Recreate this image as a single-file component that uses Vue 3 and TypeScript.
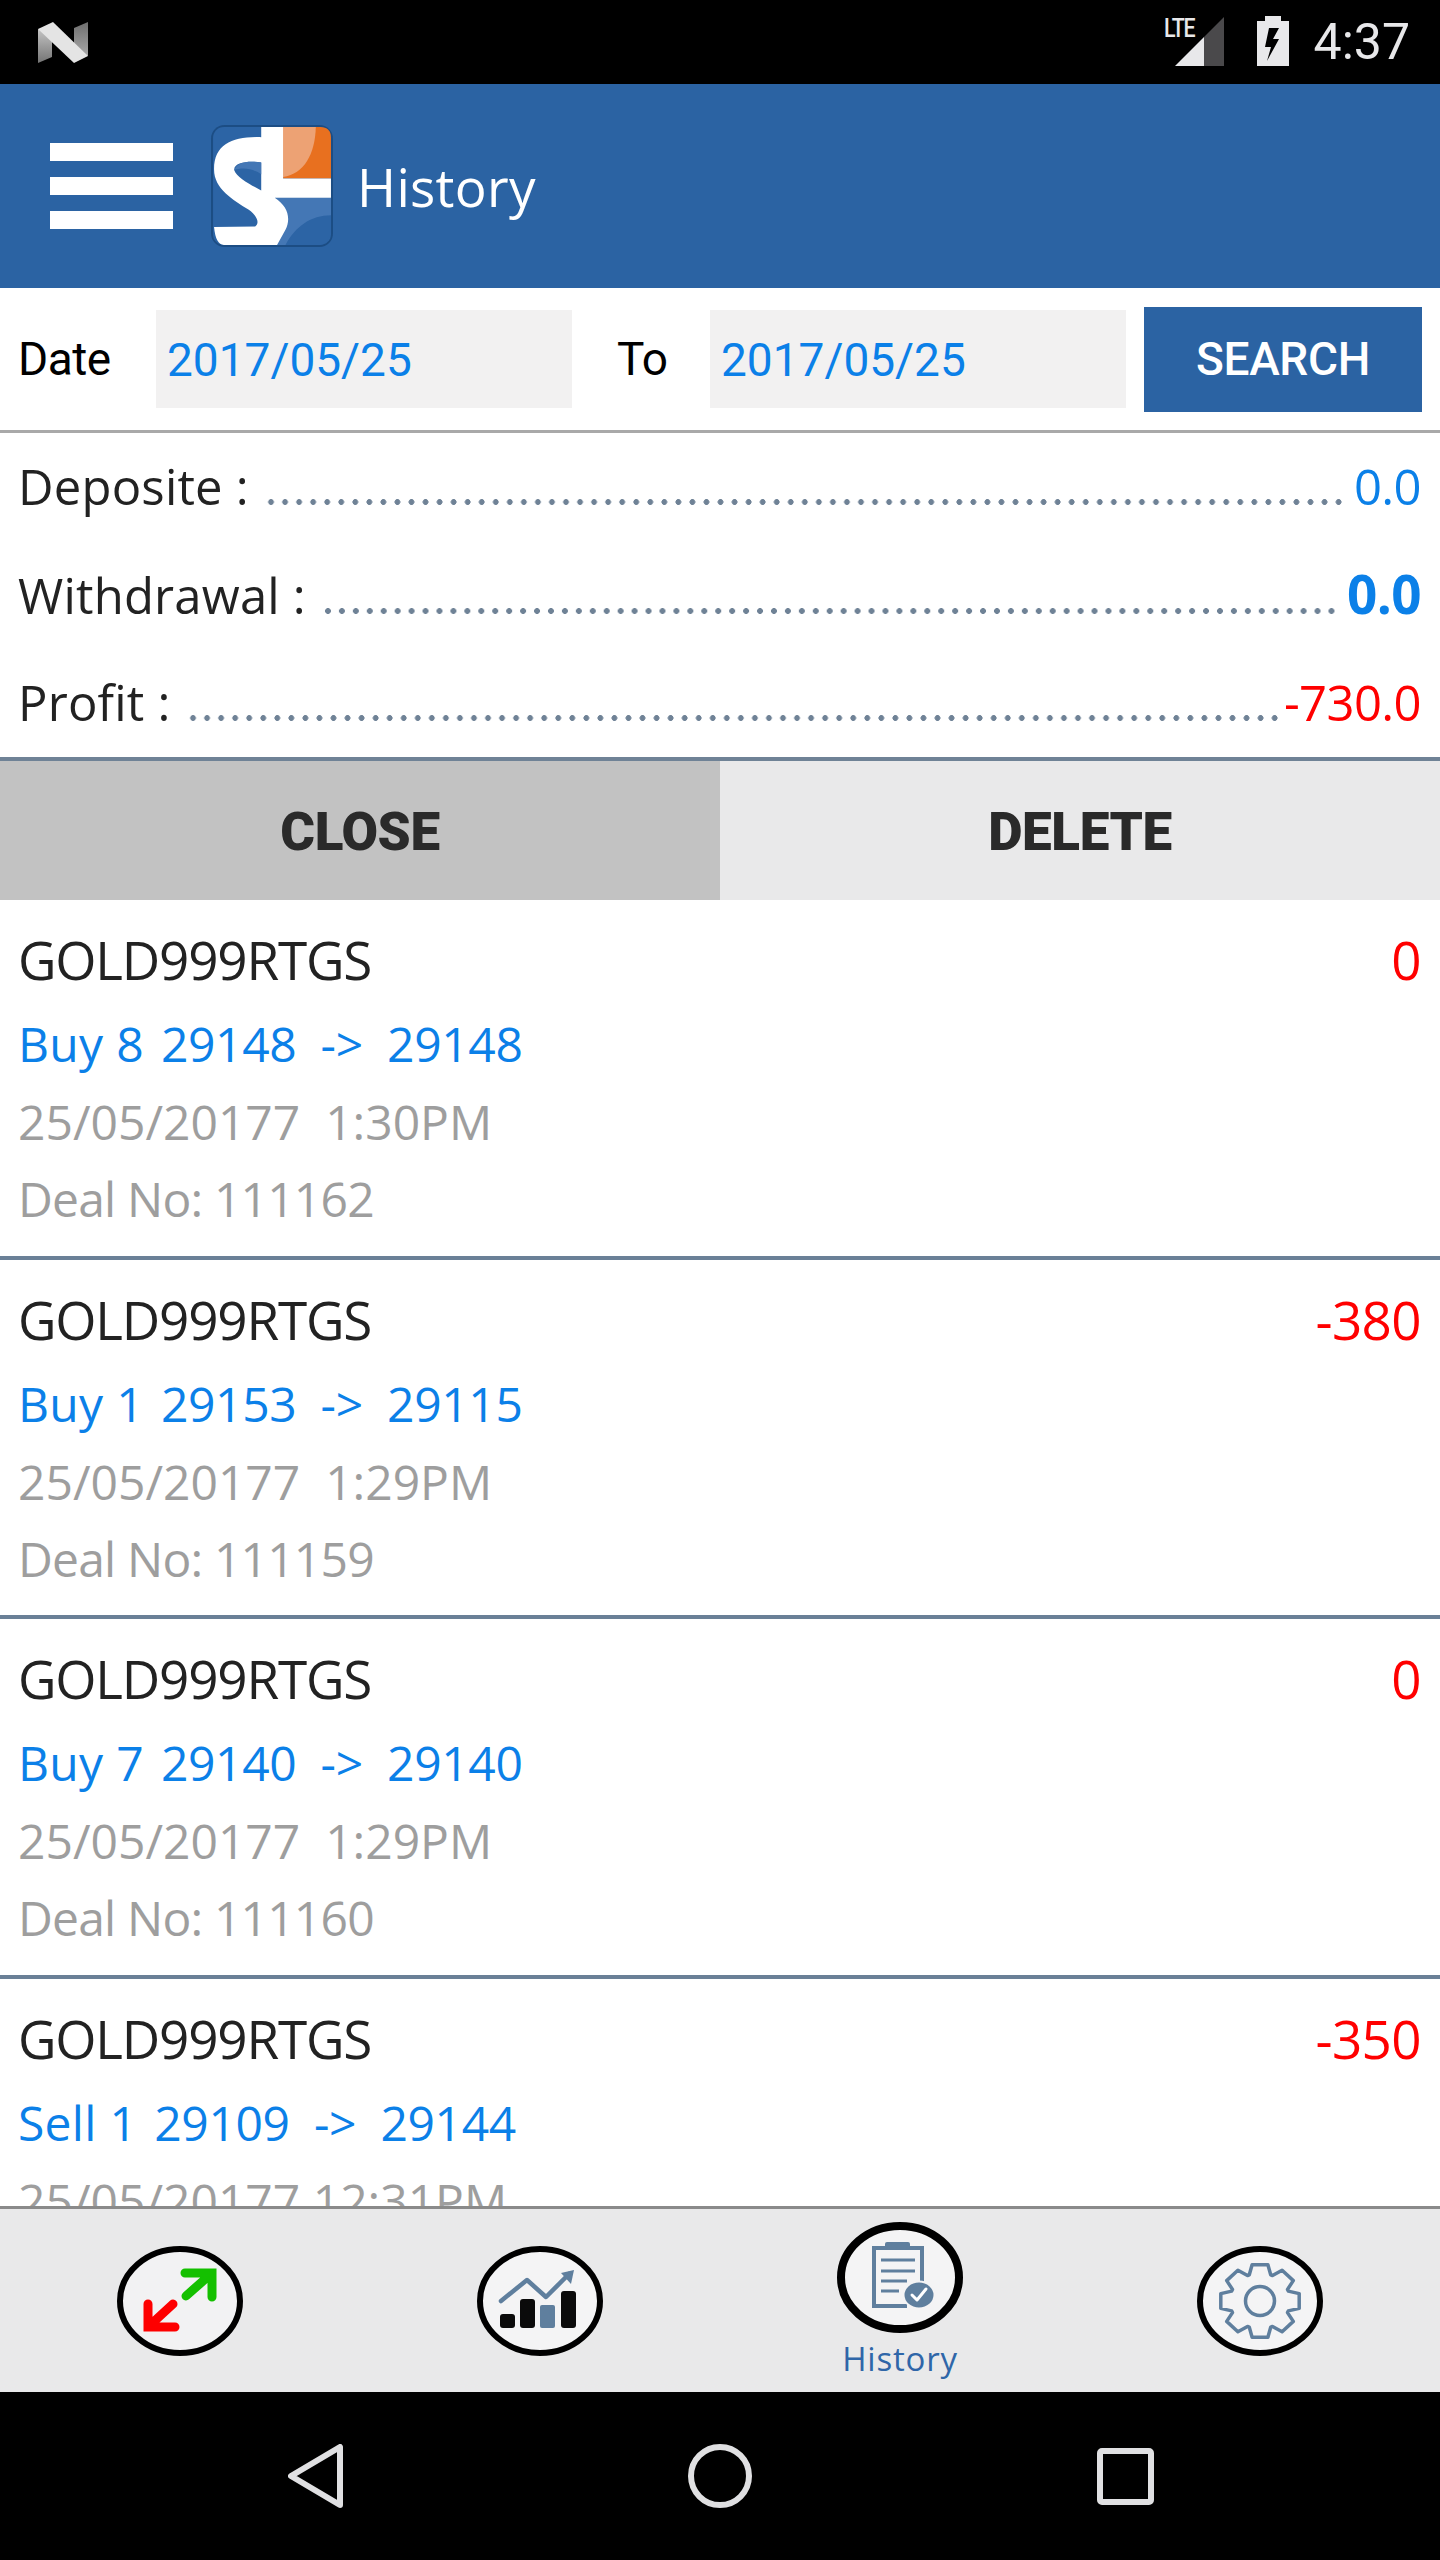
<script setup lang="ts">
import { computed } from "vue";

interface Deal {
  symbol: string;
  amount: string;
  side: string;
  prices: string;
  time: string;
  dealNo?: string;
}

interface SummaryLine {
  label: string;
  value: string;
  tone: string;
}

const summary: SummaryLine[] = [
  { label: "Deposite :", value: "0.0", tone: "blue" },
  { label: "Withdrawal :", value: "0.0", tone: "blue-bold" },
  { label: "Profit :", value: "-730.0", tone: "red" }
];

const deals: Deal[] = [
  { symbol: "GOLD999RTGS", amount: "0", side: "Buy 8", prices: "29148  ->  29148", time: "25/05/20177  1:30PM", dealNo: "Deal No: 111162" },
  { symbol: "GOLD999RTGS", amount: "-380", side: "Buy 1", prices: "29153  ->  29115", time: "25/05/20177  1:29PM", dealNo: "Deal No: 111159" },
  { symbol: "GOLD999RTGS", amount: "0", side: "Buy 7", prices: "29140  ->  29140", time: "25/05/20177  1:29PM", dealNo: "Deal No: 111160" },
  { symbol: "GOLD999RTGS", amount: "-350", side: "Sell 1", prices: "29109  ->  29144", time: "25/05/20177 12:31PM" }
];

// 8 tooth gear outline, centred on the 126x110 icon box
const gearPoints = computed(() => {
  const pts: string[] = [];
  const outer = 37;
  const root = 28;
  for (let i = 0; i < 8; i++) {
    const a = (i * Math.PI) / 4 - Math.PI / 2;
    const steps: [number, number][] = [
      [root, a - 0.36],
      [outer, a - 0.2],
      [outer, a + 0.2],
      [root, a + 0.36]
    ];
    for (const [r, t] of steps) {
      pts.push(`${(63 + r * Math.cos(t) * 1.08).toFixed(1)},${(55 + r * Math.sin(t)).toFixed(1)}`);
    }
  }
  return pts.join(" ");
});
</script>

<template>
  <div class="phone">
    <div class="status-bar">
      <svg class="n-logo" width="50" height="41" viewBox="0 0 50 41">
        <defs>
          <linearGradient id="n-left" x1="0" y1="0" x2="0" y2="1">
            <stop offset="0" stop-color="#c4c4c4" />
            <stop offset="1" stop-color="#747474" />
          </linearGradient>
          <linearGradient id="n-right" x1="0" y1="0" x2="0" y2="1">
            <stop offset="0" stop-color="#6e6e6e" />
            <stop offset="1" stop-color="#a8a8a8" />
          </linearGradient>
        </defs>
        <polygon points="0,7 14,12 14,35 0,41" fill="url(#n-left)" />
        <polygon points="36,6 50,0 50,34 36,28" fill="url(#n-right)" />
        <polygon points="0,7 15,0 50,34 36,41" fill="#e4e4e4" />
      </svg>
      <div class="status-right">
        <span class="lte">LTE</span>
        <svg class="signal" width="49" height="49" viewBox="0 0 49 49">
          <polygon points="49,0 49,49 29,49 29,20" fill="#4a494b" />
          <polygon points="29,20 29,49 0,49" fill="#e8e8ea" />
        </svg>
        <svg class="battery" width="32" height="50" viewBox="0 0 32 50">
          <path d="M8 0H24V5H32V50H0V5H8Z" fill="#e8e8ea" />
          <polygon points="22,12 12,12 8,31 14,31 10,45 22,23 16,23" fill="#000" />
        </svg>
        <span class="clock">4:37</span>
      </div>
    </div>

    <header class="app-bar">
      <div class="burger">
        <span></span>
        <span></span>
        <span></span>
      </div>
      <svg class="logo" width="124" height="124" viewBox="-9 -9 368 368">
        <rect x="-6" y="-6" width="362" height="362" rx="40" fill="#1c4d84" />
        <rect width="350" height="350" rx="32" fill="#2c64a5" />
        <path d="M183 210H350V262C290 262 245 295 215 350H170Z" fill="#4477b5" />
        <path d="M208 0H318Q350 0 350 32V153H208Z" fill="#e8701f" />
        <path d="M208 0H305C303 80 270 140 208 148Z" fill="#eda274" />
        <path d="M143 0H208V153H350V210H183C222 235 232 270 215 305L190 350H32Q8 350 3 297L125 295C140 285 130 262 105 245C60 215 3 185 3 125C3 50 60 28 143 30Z" fill="#fff" />
        <path d="M143 105C105 100 60 105 63 128C70 150 110 170 143 188Z" fill="#2c64a5" />
        <path d="M143 105C105 100 72 102 63 128C90 118 120 125 143 140Z" fill="#4477b5" />
      </svg>
      <h1 class="title">History</h1>
    </header>

    <section class="filter">
      <span class="filter-label">Date</span>
      <div class="date-field">2017/05/25</div>
      <span class="filter-label to">To</span>
      <div class="date-field">2017/05/25</div>
      <button class="search">SEARCH</button>
    </section>

    <section class="summary">
      <div v-for="line in summary" :key="line.label" class="summary-row">
        <span class="summary-label">{{ line.label }}</span>
        <span class="dots"></span>
        <span class="summary-value" :class="line.tone">{{ line.value }}</span>
      </div>
    </section>

    <div class="tabs">
      <div class="tab active">CLOSE</div>
      <div class="tab">DELETE</div>
    </div>

    <div class="deal-list">
      <article v-for="(deal, i) in deals" :key="i" class="deal">
        <div class="deal-top">
          <span class="deal-symbol">{{ deal.symbol }}</span>
          <span class="deal-amount">{{ deal.amount }}</span>
        </div>
        <div class="deal-trade">
          <span class="deal-side">{{ deal.side }}</span>
          <span class="deal-prices">{{ deal.prices }}</span>
        </div>
        <div class="deal-time">{{ deal.time }}</div>
        <div v-if="deal.dealNo" class="deal-no">{{ deal.dealNo }}</div>
      </article>
    </div>

    <nav class="bottom-tabs">
      <div class="bottom-tab">
        <svg width="126" height="110" viewBox="0 0 126 110">
          <ellipse cx="63" cy="55" rx="60" ry="52" fill="#f2f2f3" stroke="#000" stroke-width="6" />
          <path d="M68 27H95V51M95 27L69 50" fill="none" stroke="#14c000" stroke-width="9" stroke-linecap="round" />
          <path d="M31 58V81H58M31 81L56 58" fill="none" stroke="#fe0000" stroke-width="9" stroke-linecap="round" />
        </svg>
      </div>
      <div class="bottom-tab">
        <svg width="126" height="110" viewBox="0 0 126 110">
          <ellipse cx="63" cy="55" rx="60" ry="52" fill="#f4f4f5" stroke="#000" stroke-width="6" />
          <rect x="23" y="68" width="15" height="14" rx="3" fill="#0b0b0b" />
          <rect x="43" y="53" width="15" height="29" rx="3" fill="#0b0b0b" />
          <rect x="63" y="59" width="15" height="23" rx="2" fill="#5f7f9e" />
          <rect x="84" y="45" width="15" height="37" rx="3" fill="#0b0b0b" />
          <path d="M24 55L50 34L69 51L92 28" fill="none" stroke="#5f7f9e" stroke-width="4.5" stroke-linecap="round" stroke-linejoin="round" />
          <polygon points="97,24 94,38 84,27" fill="#5f7f9e" />
        </svg>
      </div>
      <div class="bottom-tab current">
        <svg width="126" height="111" viewBox="0 0 126 111">
          <ellipse cx="63" cy="55.5" rx="59" ry="51.5" fill="#f4f4f5" stroke="#000" stroke-width="8" />
          <path d="M70 84H37V26H85V60" fill="none" stroke="#5f7f9e" stroke-width="4" />
          <rect x="48" y="20" width="25" height="7" rx="2" fill="#5f7f9e" />
          <path d="M44 38H78M44 49H78M44 59H70M44 69H62" fill="none" stroke="#5f7f9e" stroke-width="3" />
          <ellipse cx="82" cy="73" rx="15.5" ry="13.5" fill="#5f7f9e" stroke="#f4f4f5" stroke-width="2" />
          <path d="M75 73L80 78L89 67" fill="none" stroke="#fff" stroke-width="3" stroke-linecap="round" stroke-linejoin="round" />
        </svg>
        <span class="bottom-label">History</span>
      </div>
      <div class="bottom-tab">
        <svg width="126" height="110" viewBox="0 0 126 110">
          <ellipse cx="63" cy="55" rx="60" ry="52" fill="#f4f4f5" stroke="#000" stroke-width="6" />
          <polygon :points="gearPoints" fill="none" stroke="#5f7f9e" stroke-width="3.5" stroke-linejoin="round" />
          <ellipse cx="63" cy="55" rx="14.5" ry="14.5" fill="none" stroke="#5f7f9e" stroke-width="3.5" />
        </svg>
      </div>
    </nav>

    <div class="nav-bar">
      <svg width="55" height="64" viewBox="0 0 55 64">
        <path d="M52 3V61L3 32Z" fill="none" stroke="#e0e0e2" stroke-width="6" stroke-linejoin="round" />
      </svg>
      <svg width="64" height="64" viewBox="0 0 64 64">
        <circle cx="32" cy="32" r="29" fill="none" stroke="#e0e0e2" stroke-width="6" />
      </svg>
      <svg width="57" height="57" viewBox="0 0 57 57">
        <rect x="3" y="3" width="51" height="51" rx="2" fill="none" stroke="#e0e0e2" stroke-width="6" />
      </svg>
    </div>
  </div>
</template>

<style scoped>
.phone {
  width: 1440px;
  height: 2560px;
  display: flex;
  flex-direction: column;
  overflow: hidden;
  background: #fff;
  font-family: "Open Sans", "Noto Sans", sans-serif;
}

.status-bar {
  height: 84px;
  flex: none;
  background: #000;
  display: flex;
  align-items: flex-start;
  justify-content: space-between;
  padding: 0 30px 0 38px;
}

.n-logo {
  margin-top: 22px;
}

.status-right {
  display: flex;
  align-items: flex-start;
  position: relative;
  font-family: Roboto, sans-serif;
  color: #e8e8ea;
}

.lte {
  position: absolute;
  left: -11px;
  top: 14px;
  font-size: 26px;
  line-height: 28px;
  font-weight: 500;
  letter-spacing: -1.5px;
  transform: scaleX(0.82);
  transform-origin: left;
}

.signal {
  margin-top: 17px;
}

.battery {
  margin: 16px 0 0 33px;
}

.clock {
  margin-left: 25px;
  font-size: 50px;
  line-height: 84px;
}

.app-bar {
  height: 204px;
  flex: none;
  background: #2b63a3;
  display: flex;
  align-items: center;
  padding-left: 50px;
}

.burger {
  width: 123px;
  display: flex;
  flex-direction: column;
  gap: 16px;
}

.burger span {
  height: 18px;
  background: #fff;
}

.logo {
  margin-left: 37px;
}

.title {
  margin: 0 0 0 23px;
  font-size: 53px;
  font-weight: 400;
  letter-spacing: 0.3px;
  color: #fff;
}

.filter {
  height: 145px;
  flex: none;
  box-sizing: border-box;
  border-bottom: 3px solid #a9a9a9;
  display: flex;
  align-items: center;
  padding: 0 18px 0 18px;
  font-family: Roboto, sans-serif;
  font-size: 46px;
}

.filter-label {
  width: 138px;
  color: #000;
  letter-spacing: -0.5px;
}

.filter-label.to {
  width: 93px;
  margin-left: 45px;
}

.date-field {
  width: 416px;
  height: 98px;
  box-sizing: border-box;
  padding-left: 11px;
  background: #f2f1f1;
  color: #0b80e8;
  line-height: 100px;
}

.search {
  width: 278px;
  height: 105px;
  margin-left: 18px;
  border: 0;
  padding: 0;
  background: #2b63a3;
  color: #fff;
  font-family: Roboto, sans-serif;
  font-size: 46px;
  font-weight: 500;
  letter-spacing: -0.3px;
}

.summary {
  flex: none;
  border-bottom: 4px solid #6f8296;
}

.summary-row {
  height: 108px;
  box-sizing: border-box;
  display: flex;
  align-items: baseline;
  padding: 0 19px 0 18px;
  font-size: 49px;
  line-height: 106px;
}

.summary-label {
  color: #222;
  letter-spacing: 0.2px;
  margin-right: 15px;
}

.dots {
  flex: 1;
  height: 6px;
  background: radial-gradient(circle at center, #6f8296 2.6px, transparent 3.2px) 0 0 / 14px 6px round no-repeat;
}

.summary-value {
  margin-left: 8px;
  letter-spacing: -0.6px;
}

.blue {
  color: #0b80e8;
}

.blue-bold {
  color: #0b80e8;
  font-weight: 700;
  font-size: 53px;
}

.red {
  color: #f00;
  margin-left: 2px;
}

.tabs {
  flex: none;
  height: 139px;
  display: flex;
}

.tab {
  flex: 1;
  background: #e9e9ea;
  color: #2a2a2a;
  font-family: Roboto, sans-serif;
  font-size: 53px;
  font-weight: 900;
  line-height: 143px;
  letter-spacing: -0.4px;
  text-align: center;
}

.tab.active {
  background: #c2c2c2;
}

.deal-list {
  flex: 1;
  min-height: 0;
  overflow: hidden;
}

.deal {
  height: 359.5px;
  box-sizing: border-box;
  padding: 19px 19px 0 18px;
  border-bottom: 4px solid #6a8097;
  white-space: pre;
}

.deal-top {
  display: flex;
  justify-content: space-between;
  font-size: 53px;
  line-height: 82px;
}

.deal-symbol {
  color: #222;
  letter-spacing: -1.2px;
}

.deal-amount {
  color: #f00;
  letter-spacing: -0.6px;
}

.deal-trade,
.deal-time,
.deal-no {
  font-size: 48px;
}

.deal-trade {
  color: #0b80e8;
  line-height: 86px;
  letter-spacing: -0.35px;
}

.deal-side {
  letter-spacing: 0.3px;
}

.deal-prices {
  margin-left: 17px;
}

.deal-time {
  color: #9e9e9e;
  line-height: 70px;
}

.deal-no {
  color: #9e9e9e;
  line-height: 84px;
  letter-spacing: -0.8px;
}

.bottom-tabs {
  flex: none;
  height: 186px;
  box-sizing: border-box;
  border-top: 3px solid #8a8a8a;
  background: #e9e9ea;
  display: grid;
  grid-template-columns: repeat(4, 1fr);
}

.bottom-tab {
  display: flex;
  flex-direction: column;
  align-items: center;
  justify-content: center;
}

.bottom-tab.current {
  justify-content: flex-start;
  padding-top: 13px;
}

.bottom-label {
  margin-top: 3px;
  font-size: 33px;
  line-height: 46px;
  color: #2f66a8;
  letter-spacing: 0.8px;
}

.nav-bar {
  flex: none;
  height: 168px;
  background: #000;
  display: flex;
  align-items: center;
  justify-content: space-between;
  padding: 0 286px 0 288px;
}
</style>

<style>
html,
body {
  margin: 0;
  background: #000;
}
</style>
